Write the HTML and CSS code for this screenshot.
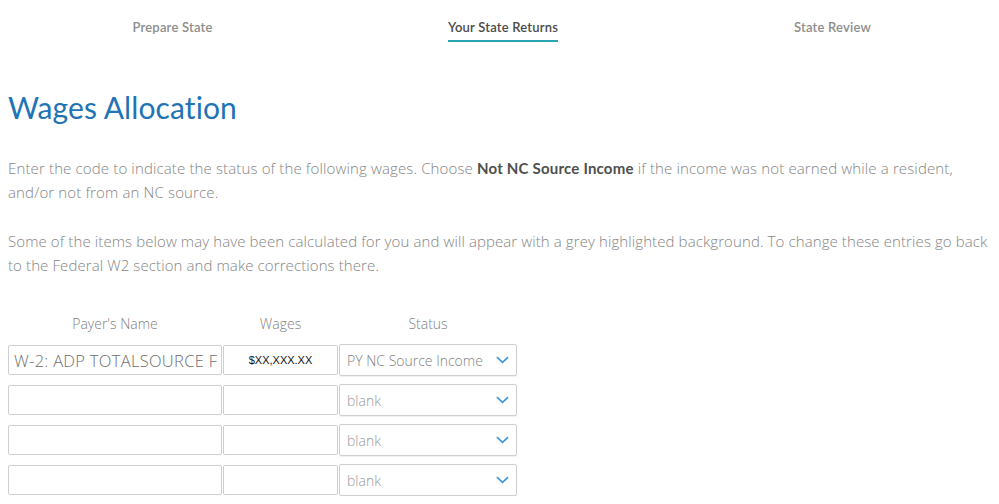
FILE: index.html
```html
<!DOCTYPE html>
<html>
<head>
<meta charset="utf-8">
<link rel="stylesheet" href="styles.css">
</head>
<body>
<nav class="steps">
  <div class="step"><span class="step-label">Prepare State</span></div>
  <div class="step active"><span class="step-label">Your State Returns</span></div>
  <div class="step"><span class="step-label">State Review</span></div>
</nav>
<main class="content">
  <h1 class="title">Wages Allocation</h1>
  <p class="desc desc-first">Enter the code to indicate the status of the following wages. Choose <b>Not NC Source Income</b> if the income was not earned while a resident, and/or not from an NC source.</p>
  <p class="desc desc-second">Some of the items below may have been calculated for you and will appear with a grey highlighted background. To change these entries go back to the Federal W2 section and make corrections there.</p>
  <div class="grid">
    <div class="head">Payer's Name</div>
    <div class="head">Wages</div>
    <div class="head">Status</div>

    <div class="field name">W-2: ADP TOTALSOURCE F</div>
    <div class="field wages">$XX,XXX.XX</div>
    <div class="select"><span class="sel-text">PY NC Source Income</span><svg class="chev" viewBox="0 0 14 8" width="13" height="8"><path d="M1 1l6 5.5L13 1" fill="none" stroke="#3b97d3" stroke-width="1.8"/></svg></div>

    <div class="field name"></div>
    <div class="field wages"></div>
    <div class="select"><span class="sel-text blank">blank</span><svg class="chev" viewBox="0 0 14 8" width="13" height="8"><path d="M1 1l6 5.5L13 1" fill="none" stroke="#3b97d3" stroke-width="1.8"/></svg></div>

    <div class="field name"></div>
    <div class="field wages"></div>
    <div class="select"><span class="sel-text blank">blank</span><svg class="chev" viewBox="0 0 14 8" width="13" height="8"><path d="M1 1l6 5.5L13 1" fill="none" stroke="#3b97d3" stroke-width="1.8"/></svg></div>

    <div class="field name"></div>
    <div class="field wages"></div>
    <div class="select"><span class="sel-text blank">blank</span><svg class="chev" viewBox="0 0 14 8" width="13" height="8"><path d="M1 1l6 5.5L13 1" fill="none" stroke="#3b97d3" stroke-width="1.8"/></svg></div>
  </div>
</main>
</body>
</html>
```
FILE: styles.css
```css
html, body {
  margin: 0;
  padding: 0;
  background: #fff;
  font-family: "Lato", "Noto Sans", sans-serif;
  overflow: hidden;
}
.steps {
  display: grid;
  grid-template-columns: 1fr 1fr 1fr;
  padding-top: 16px;
  height: 29px;
}
.step {
  text-align: center;
}
.step-label {
  display: inline-block;
  font-size: 13px;
  font-weight: 600;
  color: #8d8d8d;
  line-height: 16px;
  padding-bottom: 5px;
  letter-spacing: 0.2px;
}
.step:first-child .step-label { margin-left: 12px; }
.step.active .step-label {
  color: #4a4a4a;
  border-bottom: 2.5px solid #2aa5b5;
  margin-left: 7px;
}
.content {
  padding: 0 8px;
}
.title {
  margin: 44px 0 0;
  font-size: 30px;
  font-weight: 400;
  color: #2273b5;
  line-height: 36px;
  letter-spacing: 0.1px;
}
.desc {
  margin: 31px 0 0;
  font-family: "Open Sans", "Lato", sans-serif;
  font-weight: 300;
  font-size: 15px;
  line-height: 24px;
  color: #858585;
}
.desc-first { letter-spacing: 0.14px; }
.desc-second { letter-spacing: 0.1px; margin-top: 25px; }
.desc b {
  font-family: "Lato", sans-serif;
  color: #4f4f4f;
  font-weight: 700;
  letter-spacing: 0.2px;
}
.grid {
  display: grid;
  grid-template-columns: 214px 117px 178px;
  grid-template-rows: 22px;
  grid-auto-rows: 32px;
  row-gap: 8px;
  margin-top: 37px;
  width: 509px;
}
.head {
  font-family: "Open Sans", sans-serif;
  font-weight: 300;
  font-size: 14px;
  color: #7f7f7f;
  text-align: center;
  line-height: 20px;
  height: 20px;
  align-self: start;
}
.field {
  box-sizing: border-box;
  height: 30px;
  align-self: center;
  border: 1px solid #cfcfcf;
  border-radius: 2px;
  background: #fff;
  display: flex;
  align-items: center;
  white-space: nowrap;
  overflow: hidden;
}
.field.name {
  padding-left: 5px;
  font-family: "Open Sans", sans-serif;
  font-weight: 300;
  font-size: 16.5px;
  letter-spacing: 0.3px;
  color: #6e6e6e;
}
.field.wages {
  justify-content: center;
  font-family: "Liberation Sans", sans-serif;
  font-size: 11px;
  color: #111;
  margin-left: 1px;
  margin-right: 1px;
}
.select {
  box-sizing: border-box;
  height: 32px;
  border: 1px solid #cfcfcf;
  border-radius: 2px;
  box-shadow: 0 1px 1px rgba(0,0,0,0.06);
  display: flex;
  align-items: center;
  justify-content: space-between;
  padding: 0 7px 0 7px;
}
.sel-text {
  font-family: "Open Sans", sans-serif;
  font-weight: 300;
  font-size: 14px;
  color: #7f7f7f;
}
.sel-text.blank {
  color: #9a9a9a;
}
.chev {
  display: block;
}
```
